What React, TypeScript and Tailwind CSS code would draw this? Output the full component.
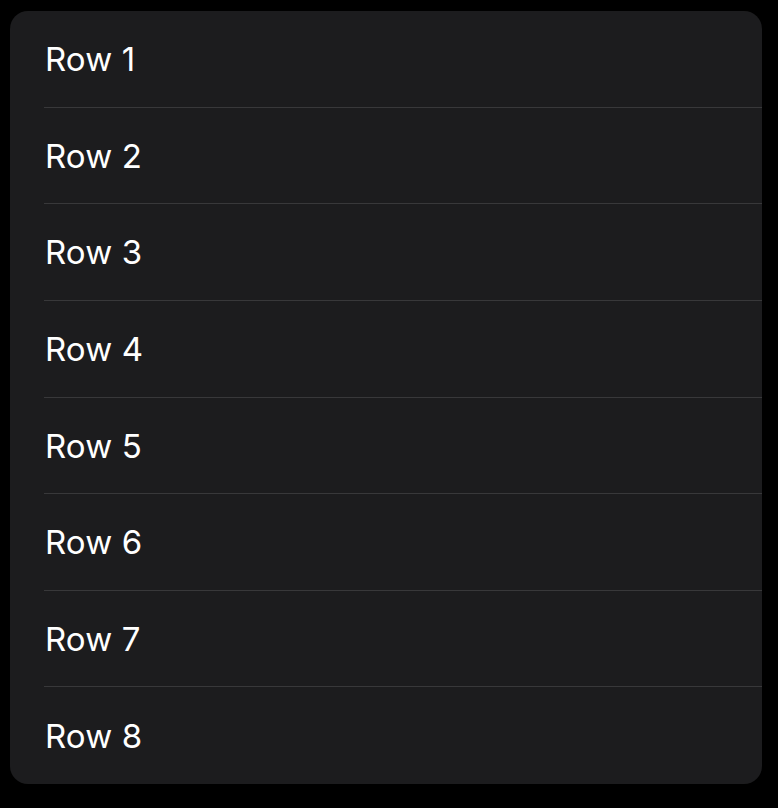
const rows = ["Row 1", "Row 2", "Row 3", "Row 4", "Row 5", "Row 6", "Row 7", "Row 8"];

export default function App() {
    return (
        <div className="w-[778px] h-[808px] bg-black pt-[11px] pl-[10px]">
            <div className="w-[752px] h-[773px] bg-[#1c1c1e] rounded-[18px] overflow-hidden flex flex-col">
                {rows.map((row, i) => (
                    <div key={row} className="flex-1 pl-[34px] flex flex-col">
                        <div className="flex-1 flex items-center pt-[2px]">
                            <span
                                className="ml-px text-[33px] text-white tracking-[0.1px]"
                                style={{ fontFamily: "Inter, 'Noto Sans', sans-serif" }}
                            >
                                {row}
                            </span>
                        </div>
                        {i < rows.length - 1 && <div className="h-px bg-[#38383a]" />}
                    </div>
                ))}
            </div>
        </div>
    );
}
